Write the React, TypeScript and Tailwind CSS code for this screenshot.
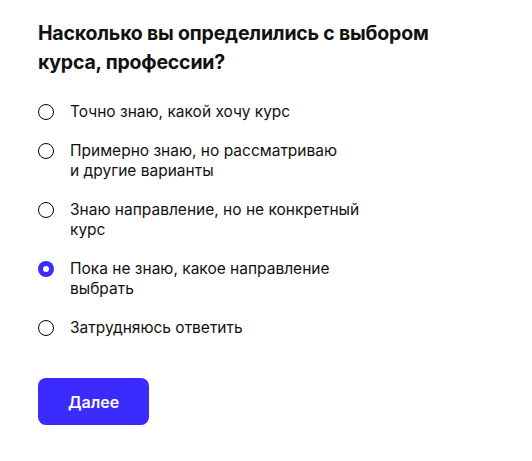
import { useState } from "react";

const options = [
  "Точно знаю, какой хочу курс",
  "Примерно знаю, но рассматриваю\nи другие варианты",
  "Знаю направление, но не конкретный\nкурс",
  "Пока не знаю, какое направление\nвыбрать",
  "Затрудняюсь ответить",
];

function Radio({ checked }: { checked: boolean }) {
  if (checked) {
    return (
      <span className="mt-[2px] flex h-[16px] w-[16px] shrink-0 items-center justify-center rounded-full bg-[#3b2bff]">
        <span className="h-[6px] w-[6px] rounded-full bg-white" />
      </span>
    );
  }
  return <span className="mt-[2px] h-[16px] w-[16px] shrink-0 rounded-full border-[1.5px] border-black" />;
}

export default function App() {
  const [selected, setSelected] = useState(3);

  return (
    <div className="min-h-[461px] bg-white px-[38px] pt-[19px] font-['Inter',sans-serif] text-[#111]">
      <h2 className="text-[19.5px] font-bold leading-[29px] tracking-[-0.2px]">
        Насколько вы определились с выбором
        <br />
        курса, профессии?
      </h2>

      <div className="mt-[25px] flex flex-col gap-[19px]">
        {options.map((text, i) => (
          <label
            key={i}
            className="flex cursor-pointer items-start gap-[16px]"
            onClick={() => setSelected(i)}
          >
            <Radio checked={selected === i} />
            <span className="whitespace-pre-line text-[15.5px] leading-[20px]">{text}</span>
          </label>
        ))}
      </div>

      <button className="mt-[40px] h-[47px] w-[111px] rounded-[8px] bg-[#3b2bff] text-[16px] font-semibold text-white">
        Далее
      </button>
    </div>
  );
}
